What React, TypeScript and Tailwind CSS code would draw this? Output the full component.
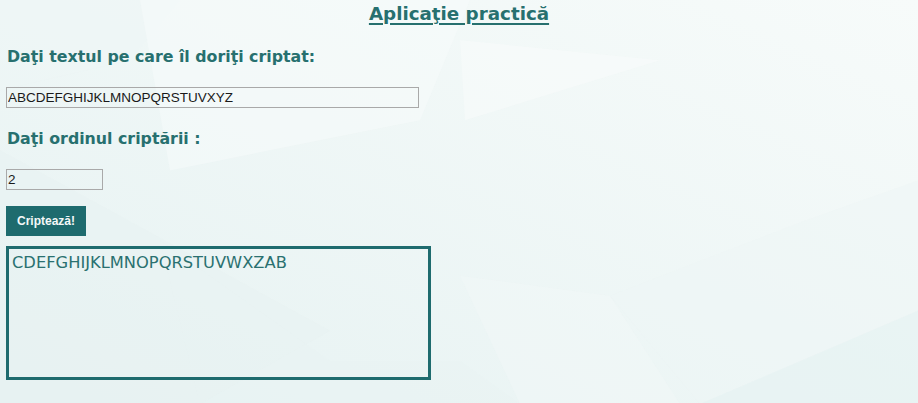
import React from "react";

export default function App() {
  return (
    <div className="relative min-h-[403px] w-full overflow-hidden bg-[#f1f8f7]">
      <svg
        className="absolute inset-0 h-full w-full"
        viewBox="0 0 918 403"
        preserveAspectRatio="none"
      >
        <defs>
          <linearGradient id="bg" x1="1" y1="0" x2="0" y2="1">
            <stop offset="0" stopColor="#f7fbfa" />
            <stop offset="1" stopColor="#e6f2f2" />
          </linearGradient>
        </defs>
        <rect x="0" y="0" width="918" height="403" fill="url(#bg)" />
        <polygon points="0,0 180,0 130,60 0,90" fill="#eef6f5" opacity="0.5" />
        <polygon points="140,0 470,0 420,120 170,170" fill="#f8fcfb" opacity="0.5" />
        <polygon points="460,40 660,60 465,120" fill="#f9fcfb" opacity="0.5" />
        <polygon points="0,150 330,330 200,403 0,403" fill="#e8f2f2" opacity="0.5" />
        <polygon points="160,240 330,360 460,360 520,403 200,403" fill="#e9f3f3" opacity="0.4" />
        <polygon points="460,275 610,295 680,403 520,403" fill="#f2f8f7" opacity="0.5" />
        <polygon points="610,295 800,222 918,180 918,310 700,403" fill="#edf6f5" opacity="0.5" />
        <polygon points="700,403 918,310 918,403" fill="#e5f2f2" opacity="0.7" />
      </svg>

      <div className="relative flex flex-col items-start px-[6px] pb-[24px]">
        <h1 className="w-full pt-[3px] text-center font-['Verdana','DejaVu_Sans',sans-serif] text-[18.3px] leading-[22px] font-bold text-[#27706f] underline decoration-[1.5px] underline-offset-[3px]">
          Aplicaţie practică
        </h1>

        <h3 className="mt-[22px] ml-[1px] font-['Verdana','DejaVu_Sans',sans-serif] text-[15.8px] leading-[19px] font-bold text-[#27706f]">
          Daţi textul pe care îl doriţi criptat:
        </h3>

        <input
          type="text"
          defaultValue="ABCDEFGHIJKLMNOPQRSTUVXYZ"
          className="mt-[21px] h-[21px] w-[413px] border border-[#a9a9a9] bg-transparent px-[1px] font-['Liberation_Sans',Arial,sans-serif] text-[13.5px] text-[#1a1a1a] outline-none"
        />

        <h3 className="mt-[21px] ml-[1px] font-['Verdana','DejaVu_Sans',sans-serif] text-[15.8px] leading-[19px] font-bold text-[#27706f]">
          Daţi ordinul criptării :
        </h3>

        <input
          type="text"
          defaultValue="2"
          className="mt-[21px] h-[21px] w-[97px] border border-[#a9a9a9] bg-transparent px-[1px] font-['Liberation_Sans',Arial,sans-serif] text-[13.5px] text-[#1a1a1a] outline-none"
        />

        <button className="mt-[16px] h-[30px] w-[80px] bg-[#1e6b6e] font-['Liberation_Sans',Arial,sans-serif] text-[12px] font-bold text-[#f4f8f8]">
          Criptează!
        </button>

        <div className="mt-[10px] h-[134px] w-[425px] border-[3px] border-[#1e6b6e] px-[3px] pt-[4px] font-['Tahoma','DejaVu_Sans',sans-serif] text-[16.3px] leading-[19px] text-[#2a7170]">
          CDEFGHIJKLMNOPQRSTUVWXZAB
        </div>
      </div>
    </div>
  );
}
